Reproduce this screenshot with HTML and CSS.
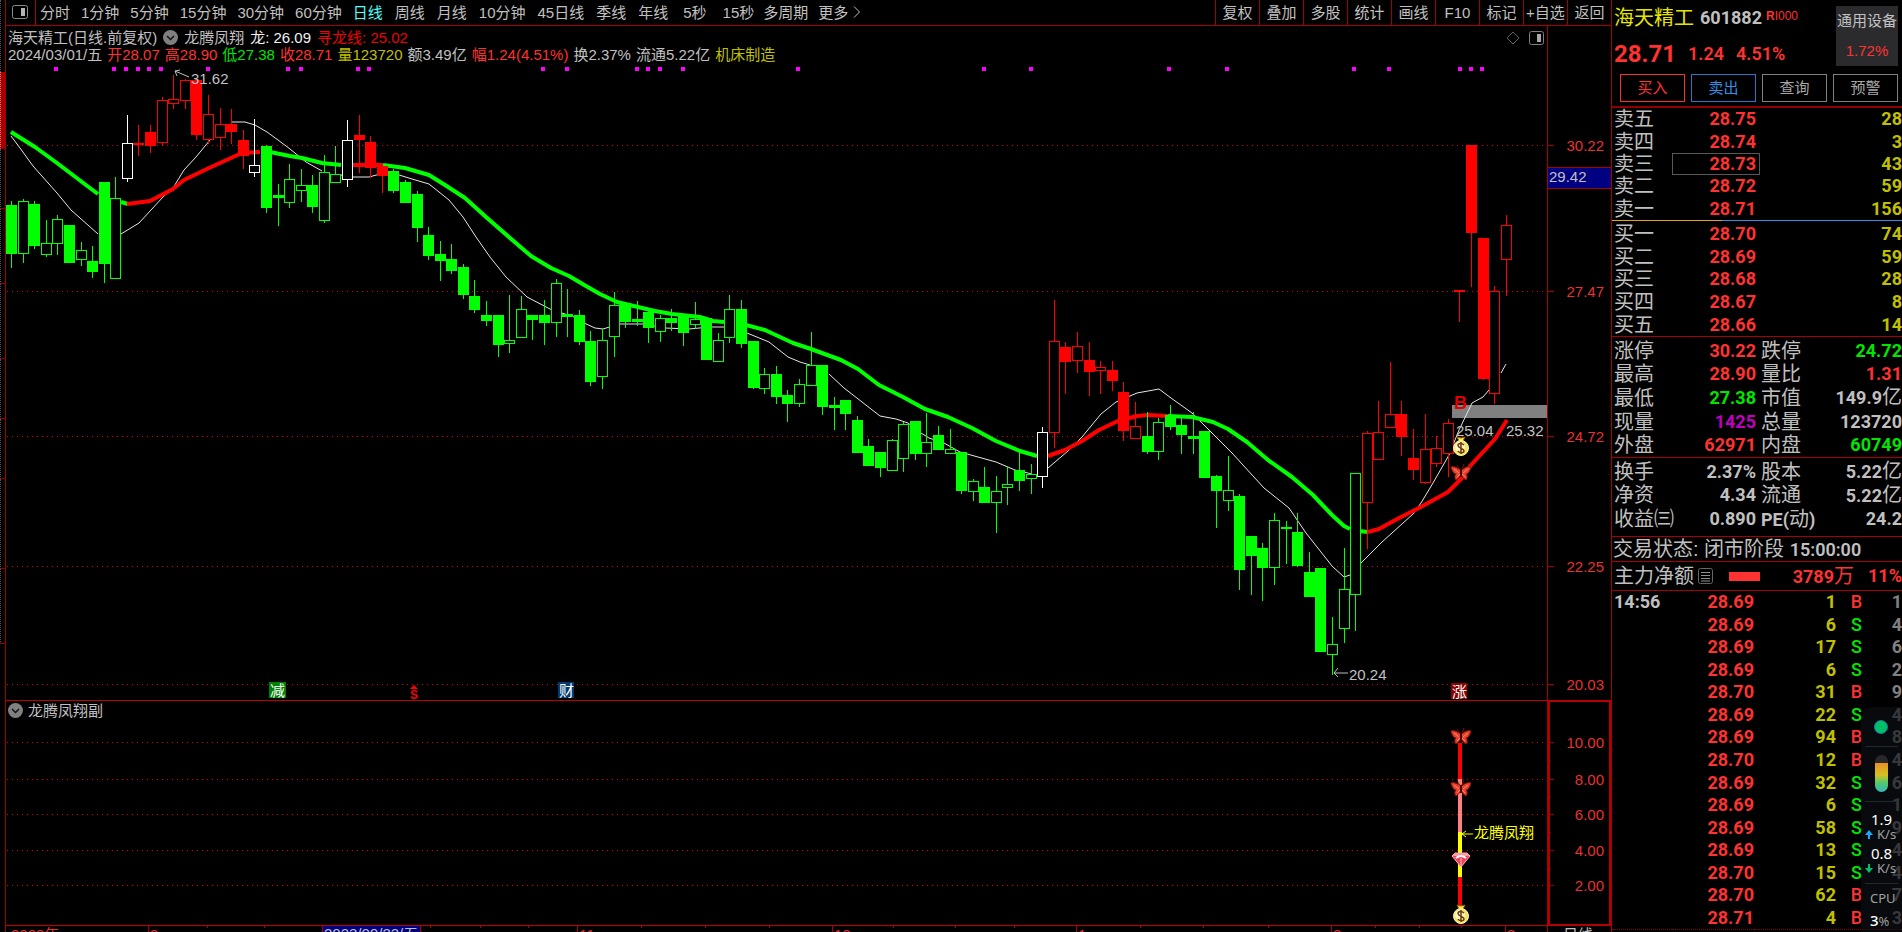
FILE: index.html
```html
<!DOCTYPE html>
<html lang="zh-CN">
<head>
<meta charset="utf-8">
<title>海天精工 601882</title>
<link rel="stylesheet" href="styles.css">
</head>
<body>
<div class="app">
  <aside class="rail">
    <span class="rail-seg s1"></span><span class="rail-seg active"></span><span class="rail-seg s2"></span><span class="rail-seg s3"></span><span class="rail-seg s3"></span><span class="rail-seg s4"></span><span class="rail-seg s4"></span><span class="rail-seg s5"></span><span class="rail-seg s3"></span>
  </aside>

  <main class="main">
    <nav class="toolbar">
      <button class="tool-icon" aria-label="布局"><svg width="16" height="14" viewBox="0 0 16 14"><rect x=".5" y=".5" width="15" height="13" rx="2" fill="none" stroke="#8c8c8c"/><rect x="9" y="3" width="4" height="8" fill="#b4b4b4"/></svg></button>
      <div class="periods">
        <div class="group minutes"><button>分时</button><button>1分钟</button><button>5分钟</button><button>15分钟</button><button>30分钟</button><button>60分钟</button></div>
        <div class="group days"><button class="on">日线</button><button>周线</button><button>月线</button><button>10分钟</button><button>45日线</button><button>季线</button><button>年线</button></div>
        <div class="group seconds"><button>5秒</button><button>15秒</button></div>
        <div class="group more"><button>多周期</button><button>更多<svg width="8" height="12" viewBox="0 0 8 12"><path d="M1 .5 6.500 6 1 11.500" fill="none" stroke="#c0c0c0"/></svg></button></div>
      </div>
      <div class="actions"><button>复权</button><button>叠加</button><button>多股</button><button>统计</button><button>画线</button><button>F10</button><button>标记</button><button>+自选</button><button>返回</button></div>
    </nav>

    <section class="chart">
      <svg id="stage" class="stage" viewBox="5 26 1606 906" preserveAspectRatio="xMinYMin meet">
        <defs>
          <g id="butterfly">
            <path d="M-1-4-4-8M1-4 3-9" stroke="#7a1010" fill="none"/>
            <path d="M0-2C-3-6-8-7-10-6-9-2-7 1-5 1-7 3-6 6-5 7-3 6-1 3 0 2 1 3 3 6 5 7 6 6 7 3 5 1 7 1 9-2 10-6 8-7 3-6 0-2Z" fill="#e8402c" stroke="#8c1408"/>
            <path d="M-7-4-2 0M7-4 2 0M-4 4-1 1M4 4 1 1" stroke="#ff8a60" fill="none"/>
            <path d="M0-4V4" stroke="#400" stroke-width="2"/>
          </g>
          <g id="moneybag">
            <path d="M-4-9 0-8 4-9 2-5H-2Z" fill="#ffe94a" stroke="#806000"/>
            <circle cx="0" cy="2" r="7.500" fill="#f4e55c" stroke="#fff6b0"/>
            <circle cx="-1" cy="1" r="5" fill="#fff7c8"/>
            <path d="M3-1C1-3-3-3-3-.5S3 2.500 3 5-2 7-3 5M0-4V8" stroke="#6b3a10" stroke-width="1.500" fill="none"/>
          </g>
          <g id="diamond">
            <path d="M-9-4-6-7H6L9-4 0 7Z" fill="#f2415c" stroke="#ffb0b8"/>
            <path d="M-6-7H6L8-4H-8Z" fill="#ff9aa8"/>
            <path d="M-5-2Q0-6 5-2" stroke="#fff" stroke-width="2" fill="none"/><path d="M0-2V6" stroke="#ffb6c0"/>
          </g>
        </defs>
        <g id="grid" class="grid-lines"></g>
        <rect x="1452" y="405" width="96" height="13" fill="#808080"/>
        <text x="1454" y="409" class="flag-b">B</text>
        <g id="averages"></g>
        <g id="candles" class="crisp"></g>
        <g id="dots" class="crisp" fill="#ff00ff"></g>
        <g class="note">
          <path d="M189 77 175 71M180 70 175 71 177 76"/><text x="191" y="84">31.62</text>
          <path d="M1348 673H1334M1338 668 1334 673 1338 677"/><text x="1349" y="680">20.24</text>
          <text x="1456" y="436">25.04</text><text x="1506" y="436">25.32</text>
        </g>
        <use href="#moneybag" x="1461" y="446"/><use href="#butterfly" x="1461" y="473"/>
        <g class="tags">
          <rect x="269" y="682" width="17" height="16" fill="#008000"/><text x="270" y="696">减</text>
          <rect x="558" y="682" width="16" height="16" fill="#003a70"/><text x="559" y="696">财</text>
          <rect x="1451" y="683" width="16" height="16" fill="#8c0000"/><text x="1452" y="697">涨</text>
          <path d="M410 689 414 685 418 689Z" fill="#f00"/><text x="410" y="699" class="dollar">S</text>
        </g>
        <path d="M1513 32 1519 38 1513 44 1507 38Z" class="rhomb"/>
        <g><rect x="1529.500" y="31.500" width="14" height="13" rx="2" fill="none" stroke="#808080"/><rect x="1537" y="34" width="4" height="8" fill="#a8a8a8"/></g>
        <g class="crisp">
          <rect x="1458" y="743" width="4" height="36" fill="#f00"/><rect x="1458" y="779" width="4" height="53" fill="#ff8080"/><rect x="1458" y="832" width="4" height="45" fill="#ff0"/><rect x="1458" y="877" width="4" height="30" fill="#f00"/>
        </g>
        <use href="#butterfly" x="1461" y="737"/><use href="#butterfly" x="1461" y="789"/><use href="#diamond" x="1461" y="860"/><use href="#moneybag" x="1461" y="914"/>
        <path d="M1473 834H1462M1466 831 1462 834 1466 837" class="sig"/><text x="1474" y="838" class="sig-text">龙腾凤翔</text>
        <g id="axis"></g>
      </svg>
      <header class="legend">
        <div class="row"><span>海天精工(日线.前复权)</span>
          <button class="chev" aria-label="指标"><svg width="15" height="15" viewBox="0 0 15 15"><circle cx="7.500" cy="7.500" r="7.500" fill="#808080"/><path d="M4 6 7.500 9.500 11 6" fill="none" stroke="#111" stroke-width="1.500"/></svg></button>
          <span>龙腾凤翔</span><span class="white">龙: 26.09</span><span class="pure">寻龙线: 25.02</span></div>
        <div class="row quote"><span>2024/03/01/五</span><span class="red">开28.07</span><span class="red">高28.90</span><span class="green">低27.38</span><span class="red">收28.71</span><span class="yellow">量123720</span><span>额3.49亿</span><span class="red">幅1.24(4.51%)</span><span>换2.37%</span><span>流通5.22亿</span><span class="yellow">机床制造</span></div>
      </header>
      <header class="legend sub">
        <div class="row"><button class="chev" aria-label="副图指标"><svg width="15" height="15" viewBox="0 0 15 15"><circle cx="7.500" cy="7.500" r="7.500" fill="#808080"/><path d="M4 6 7.500 9.500 11 6" fill="none" stroke="#111" stroke-width="1.500"/></svg></button><span>龙腾凤翔副</span></div>
      </header>
    </section>
  </main>

  <aside class="panel">
    <header class="head">
      <div class="ident">
        <div class="names"><strong class="name">海天精工</strong><span class="num code">601882</span><span class="flags"><b>R</b>I000</span></div>
        <div class="price-line"><span class="num last">28.71</span><span class="num red">1.24</span><span class="num red">4.51%</span></div>
      </div>
      <div class="sector"><span>通用设备</span><span class="red">1.72%</span></div>
      <div class="trade"><button class="buy">买入</button><button class="sell">卖出</button><button>查询</button><button>预警</button></div>
    </header>
    <table class="book asks"><tbody>
      <tr><th>卖五</th><td>28.75</td><td>28</td></tr><tr><th>卖四</th><td>28.74</td><td>3</td></tr><tr><th>卖三</th><td class="mark">28.73</td><td>43</td></tr><tr><th>卖二</th><td>28.72</td><td>59</td></tr><tr><th>卖一</th><td>28.71</td><td>156</td></tr>
    </tbody></table>
    <div class="ratio"><i></i></div>
    <div class="block"><table class="book bids"><tbody>
      <tr><th>买一</th><td>28.70</td><td>74</td></tr><tr><th>买二</th><td>28.69</td><td>59</td></tr><tr><th>买三</th><td>28.68</td><td>28</td></tr><tr><th>买四</th><td>28.67</td><td>8</td></tr><tr><th>买五</th><td>28.66</td><td>14</td></tr>
    </tbody></table></div>
    <div class="block"><table class="info five"><tbody>
      <tr><th>涨停</th><td class="red">30.22</td><th>跌停</th><td class="green">24.72</td></tr>
      <tr><th>最高</th><td class="red">28.90</td><th>量比</th><td class="red">1.31</td></tr>
      <tr><th>最低</th><td class="green">27.38</td><th>市值</th><td>149.9<span>亿</span></td></tr>
      <tr><th>现量</th><td class="purple">1425</td><th>总量</th><td>123720</td></tr>
      <tr><th>外盘</th><td class="red">62971</td><th>内盘</th><td class="green">60749</td></tr>
    </tbody></table></div>
    <div class="block tall"><table class="info three"><tbody>
      <tr><th>换手</th><td>2.37%</td><th>股本</th><td>5.22<span>亿</span></td></tr>
      <tr><th>净资</th><td>4.34</td><th>流通</th><td>5.22<span>亿</span></td></tr>
      <tr><th>收益㈢</th><td>0.890</td><th><span class="num">PE(</span>动<span class="num">)</span></th><td>24.2</td></tr>
    </tbody></table></div>
    <div class="status"><span>交易状态: 闭市阶段 </span><span class="num">15:00:00</span></div>
    <div class="force"><span>主力净额</span><svg width="16" height="16" viewBox="0 0 16 16"><rect x=".5" y=".5" width="14" height="15" rx="2" fill="none" stroke="#666"/><path d="M3 4.500H12M3 7.500H12M3 10.500H12M3 13H12" stroke="#909090"/></svg><i class="bar"></i><span class="num red amount">3789<span>万</span></span><span class="num red">11%</span></div>
    <table class="ticks"><tbody id="ticks"></tbody></table>
    <div class="monitor">
      <i class="led"></i>
      <div class="gauge-box"><i class="gauge"></i></div>
      <div class="net"><span class="val">1.9</span><span class="unit"><svg width="8" height="9" viewBox="0 0 8 9"><path d="M4 0 8 5H5V9H3V5H0Z" fill="#18a8ff"/></svg>K/s</span><span class="val second">0.8</span><span class="unit"><svg width="8" height="9" viewBox="0 0 8 9"><path d="M4 9 8 4H5V0H3V4H0Z" fill="#00c070"/></svg>K/s</span></div>
      <div class="cpu"><span>CPU</span><span class="load"><b>3</b>%</span></div>
    </div>
  </aside>
</div>
<script src="chart.js"></script>
</body>
</html>
```
FILE: styles.css
```css
* { box-sizing: border-box; }
body { margin: 0; background: #000; color: #c0c0c0; font: 15px/17px "Liberation Sans", "Noto Sans CJK SC", sans-serif; }
button { font: inherit; color: inherit; background: none; border: 0; padding: 0; margin: 0; cursor: pointer; white-space: nowrap; }
svg { display: block; }
.app { display: grid; grid-template-columns: 5px minmax(0, 1fr) 291px; height: 100vh; overflow: hidden; }

.red { color: #ff3232; }
.pure { color: #f00000; }
.green { color: #00e600; }
.yellow { color: #c0c000; }
.purple { color: #c000c0; }
.white { color: #f0f0f0; }
.num { font-family: Roboto, "Noto Sans CJK SC", sans-serif; font-weight: 700; font-size: 18px; }

.rail { display: flex; flex-direction: column; }
.rail-seg { border-bottom: 1px solid #900000; border-left: 1px dotted #555; }
.s1 { height: 72px; border-bottom: 0; }
.rail-seg.active { height: 77px; background: #a80000; border-left-color: #d88; }
.s2 { height: 60px; }
.s3 { height: 75px; }
.s4 { height: 60px; }
.s5 { height: 90px; }

.main { display: flex; flex-direction: column; min-width: 0; border-left: 1px solid #a00000; }
.toolbar { display: flex; height: 26px; border-bottom: 1px solid #a80000; overflow: hidden; }
.toolbar button { padding-bottom: 1px; }
.toolbar .tool-icon { width: 30px; padding: 0 0 1px 6px; border-right: 1px solid #a80000; }
.periods { display: flex; flex: 1; padding-left: 4px; }
.group { display: flex; }
.minutes { gap: 11px; margin-right: 11px; }
.days { gap: 12px; margin-right: 15px; }
.seconds { gap: 16px; margin-right: 9px; }
.more { gap: 10px; }
.more button { display: flex; align-items: center; gap: 5px; }
.on { color: #50ffff; }
.actions { display: flex; }
.actions button { width: 44px; border-left: 1px solid #a00000; }

.chart { position: relative; flex: 1; display: grid; grid-template-rows: 675px 1fr; min-height: 0; }
.stage { position: absolute; top: 0; right: 0; bottom: 0; left: -1px; width: calc(100% + 1px); height: 100%; font-size: 15px; }
.legend { position: relative; padding: 3px 2px; align-self: start; }
.legend.sub { padding-top: 1px; }
.row { display: flex; align-items: center; height: 17px; gap: 6px; white-space: nowrap; }
.quote { gap: 5px; }
.sub .row { gap: 5px; }
.crisp { shape-rendering: crispEdges; }
.grid-lines line { stroke: #d80000; stroke-dasharray: 1 4; shape-rendering: crispEdges; }
.note text { fill: #c0c0c0; }
.note path { fill: none; stroke: #c0c0c0; }
.flag-b { fill: #e00000; font-weight: bold; font-size: 18px; }
.tags text { fill: #fff; font-size: 15px; }
.tags .dollar { fill: #f00; font-size: 12px; font-weight: bold; }
.rhomb { fill: none; stroke: #606060; }
.sig { fill: none; stroke: #ff0; }
.sig-text { fill: #ff0; }
.axis-text { fill: #e63232; text-anchor: end; }
.axis-time { fill: #e63232; }
.axis-sel { fill: #c0c0c0; }

.panel { position: relative; border-left: 1px solid #a80000; display: flex; flex-direction: column; font-size: 20px; line-height: 22px; min-width: 0; }
.panel > * { flex: none; }
.head { height: 108px; border-bottom: 2px solid #900000; display: grid; grid-template-columns: 1fr 62px; align-content: start; padding: 6px 4px 0 2px; }
.names { display: flex; align-items: center; height: 24px; }
.name { color: #e6e600; font-weight: 400; }
.code { margin-left: 6px; }
.flags { color: #ff3232; font-size: 12px; margin-left: 4px; line-height: 14px; align-self: start; padding-top: 3px; }
.price-line { display: flex; align-items: center; gap: 12px; height: 38px; padding-top: 9px; }
.price-line .last { font-size: 24px; color: #ff3232; }
.price-line .red, .status .num { font-weight: 600; }
.sector { height: 60px; background: #2b2b2e; font-size: 15px; text-align: center; display: flex; flex-direction: column; justify-content: space-between; padding: 4px 0; }
.trade { grid-column: 1 / 3; display: grid; grid-template-columns: repeat(4, 1fr); gap: 6px; padding: 6px 0 0 6px; font-size: 15px; }
.trade button { height: 28px; border: 1px solid #808080; color: #a8a8a8; }
.trade .buy { border-color: #f03232; color: #ff3232; }
.trade .sell { border-color: #2878c8; color: #3290e6; }

table { border-collapse: collapse; table-layout: fixed; width: 100%; }
th { font-weight: 400; text-align: left; padding: 0 0 0 2px; white-space: nowrap; }
td { padding: 0; text-align: right; font-family: Roboto, sans-serif; font-weight: 700; font-size: 18px; white-space: nowrap; }
td span, .amount span { font: 20px/20px "Noto Sans CJK SC", sans-serif; }
.book th { width: 60px; }
.book td { color: #c0c000; }
.book th + td { width: 88px; padding-right: 4px; color: #ff3232; }
.book .mark { outline: 1px solid #585858; outline-offset: -1px; }
.asks { height: 112px; }
.bids { height: 113px; }
.ratio { height: 1px; background: #3290e6; }
.ratio i { display: block; width: 38%; height: 1px; background: #e8a020; }
.block { padding-top: 2px; border-bottom: 1px solid #a80000; }
.tall { padding-bottom: 5px; }
.five { height: 118px; }
.three { height: 71px; }
.info th { width: 62px; }
.info th + td { width: 82px; }
.info td + th { padding-left: 5px; width: 67px; }
.info td + th + td { width: auto; }
.status { height: 25px; border-bottom: 1px solid #a80000; padding-left: 1px; white-space: pre; line-height: 24px; }
.force { height: 29px; border-bottom: 1px solid #a80000; padding-left: 2px; display: flex; align-items: center; }
.force svg { margin-left: 4px; }
.bar { width: 31px; height: 9px; background: #ff3232; margin-left: 15px; }
.amount { margin-left: auto; margin-right: 14px; }
.ticks { height: 339px; border-bottom: 1px dotted #900000; }
.ticks th { font: 700 18px/22px Roboto, sans-serif; width: 60px; }
.ticks .p { width: 82px; color: #ff3232; }
.ticks .q { width: 82px; color: #c0c000; }
.ticks .s { width: 41px; text-align: center; font-weight: 500; }
.ticks .n { color: #808080; }

.monitor { position: absolute; right: 0; bottom: 0; width: 41px; height: 225px; background: rgba(14, 15, 20, .64); border-radius: 12px 0 0 0; padding: 0 4px; font: 15px/18px "Noto Sans", sans-serif; color: #a0a0a0; }
.led { display: block; width: 14px; height: 14px; border-radius: 50%; background: #00c068; border: 1px solid #2078a0; margin: 13px 0 12px 9px; }
.gauge-box { border: 1px solid #1e2a2c; border-width: 1px 0; height: 56px; padding: 8px 10px; }
.gauge { display: block; width: 13px; height: 37px; border-radius: 7px; background: linear-gradient(#28282a 0 8px, #e89028 8px, #d8c020 20px, #50c870 28px, #38b8b8); }
.net { height: 82px; border-bottom: 1px solid #1e2a2c; padding-top: 8px; }
.val { display: block; color: #fff; line-height: 18px; text-align: center; }
.second { margin-top: 4px; }
.unit { display: flex; align-items: center; gap: 4px; font-size: 13px; line-height: 12px; }
.cpu { font-size: 13px; padding: 5px 0 0 5px; }
.cpu span { display: block; }
.load { padding-top: 4px; }
.load b { color: #fff; font-weight: 500; font-size: 15px; }
```
FILE: chart.js
```js
const NS = 'http://www.w3.org/2000/svg';
const add = (parent, tag, attrs, text) => {
  const el = document.createElementNS(NS, tag);
  for (const k in attrs) el.setAttribute(k, attrs[k]);
  if (text) el.textContent = text;
  parent.appendChild(el);
  return el;
};
const $ = id => document.getElementById(id);

/* type, high, top, bottom, low; upper case = filled body */
const candles = `G 201 205 253 267|g 199 201 253 262|G 201 204 245 248|g 220 243 254 256|g 215 219 243 254|G 225 225 262 262|g 242 250 259 265|G 246 261 271 277|G 182 182 263 282|g 177 198 278 278|w 115 143 178 181|R 125 143 144 155|R 125 132 145 152|r 97 100 142 145|r 75 99 103 108|r 79 80 100 108|R 80 80 134 139|r 95 114 139 143|r 108 124 137 149|R 109 124 131 143|R 130 140 155 168|w 119 165 172 176|G 145 146 207 212|G 184 195 197 225|g 164 179 202 207|g 169 185 190 201|G 175 185 206 212|g 155 172 220 222|g 146 174 182 182|w 120 140 179 186|R 115 135 139 172|R 136 142 167 177|R 165 166 175 192|G 169 171 190 192|G 180 182 202 202|G 191 194 227 241|G 227 235 255 259|G 241 254 260 280|G 244 259 270 273|G 264 267 294 298|G 280 296 309 312|G 301 315 320 325|G 315 315 344 356|g 295 340 343 352|g 296 309 337 337|G 315 315 319 339|G 300 315 322 344|g 279 283 322 336|G 289 314 316 336|G 310 315 341 344|G 331 341 381 385|g 329 340 376 388|g 292 305 336 356|G 302 303 321 327|G 301 319 321 325|G 310 312 327 342|g 315 318 331 341|G 309 318 322 330|G 314 314 332 345|g 302 319 324 328|G 318 318 359 359|g 333 340 361 361|g 295 309 337 342|G 300 309 343 347|G 341 341 387 388|g 368 374 388 393|G 366 374 396 403|G 390 395 403 421|g 379 384 403 406|g 332 365 385 385|G 365 365 406 414|G 397 405 407 429|G 400 400 413 429|G 416 420 452 452|G 439 446 465 465|G 452 452 467 476|g 439 440 470 470|g 422 424 458 471|G 421 421 453 459|g 413 442 453 466|G 426 435 449 449|g 429 449 453 453|G 452 452 490 493|g 479 481 491 500|G 467 487 502 502|g 476 491 502 532|g 466 484 487 504|G 452 470 480 490|g 464 474 478 493|w 427 432 476 487|r 300 341 432 447|R 342 347 361 393|r 332 346 360 372|R 342 360 371 395|r 361 367 370 393|R 361 370 380 390|R 382 392 430 440|r 402 426 438 438|G 412 436 451 453|g 418 422 451 459|G 405 415 426 429|G 418 425 434 453|G 412 436 438 453|G 431 431 477 477|G 475 476 490 527|g 456 490 500 510|G 494 496 569 589|G 536 536 555 594|G 543 548 567 600|g 513 520 567 584|G 521 527 528 563|G 513 532 565 566|G 552 572 596 596|G 568 568 651 651|g 617 644 654 674|g 548 589 628 642|g 473 473 594 630|r 431 433 502 548|r 401 432 459 459|r 362 414 427 427|R 401 414 436 455|R 429 458 469 479|r 414 449 482 483|r 436 448 463 466|r 419 423 453 476|R 290 290 291 321|R 145 145 232 286|R 238 238 378 379|r 286 291 393 403|r 215 225 259 295`;
const tone = { g: '#00ff00', r: '#ff0000', w: '#ffffff' };
candles.split('|').forEach((row, i) => {
  const [type, ...v] = row.split(' ');
  const [high, top, bottom, low] = v.map(Number);
  const x = Math.floor(11.5 + i * 11.587);
  const color = tone[type.toLowerCase()];
  const filled = type < 'a';
  const g = $('candles');
  if (low > high) add(g, 'rect', { x, y: high, width: 1, height: low - high + 1, fill: color });
  if (filled) add(g, 'rect', { x: x - 5, y: top, width: 11, height: Math.max(1, bottom - top + 1), fill: color });
  else add(g, 'rect', { x: x - 4.5, y: top + .5, width: 10, height: bottom - top, fill: '#000', stroke: color });
});

const line = (points, stroke, width) =>
  add($('averages'), 'polyline', { points, stroke, 'stroke-width': width, fill: 'none', 'stroke-linejoin': 'round' });
[
  '11,136 20,148 33,166 57,193 71,210 98,234', '121,234 139,223 151,210 163,197 173,188 184,170 196,157 210,140',
  '231,122 245,122 255,125 267,132 278,140 290,149 306,162 322,171', '341,175 352,177 369,177 380,174 396,174 412,179 429,184 449,200 463,217 476,237 490,257 506,277 527,297 550,309 562,313 574,317 584,323 595,328 603,329 619,324 643,324 665,328 689,329 710,327 724,327',
  '747,333 769,342 788,357 800,362 810,365', '829,374 844,388 862,402 880,416 896,419 908,423 921,433 929,438 944,443 960,452 996,462 1015,470 1032,474',
  '1048,468 1068,451 1082,437 1101,414 1116,402 1137,393 1159,389 1171,398 1192,413 1213,434 1232,453 1264,488 1289,508 1306,533 1332,566 1344,577 1350,575',
  '1360,564 1382,542 1413,514 1421,503 1433,483 1449,455 1459,430 1472,403 1483,397 1489,390', '1501,373 1506,364'
].forEach(p => line(p, '#e6e6e6', 1));
[
  ['11,132 35,147 57,163 82,182 98,194', '#00ff00'], ['121,202 128,204', '#00ff00'],
  ['127,204 150,201 173,189 184,180 209,168 231,158 242,153 260,152', '#ff0000'],
  ['270,152 290,156 302,158 322,163 341,165', '#00ff00'], ['352,165 383,165', '#ff0000'],
  ['383,165 405,168 429,175 445,185 465,198 486,217 510,238 531,256 551,268 569,276 586,286 600,294 617,302 638,307 655,311 672,314 700,317 713,321 724,322', '#00ff00'],
  ['746,325 765,330 793,343 811,349 841,360 858,369 879,385 903,397 925,409 948,417 972,428 996,441 1020,451 1037,456', '#00ff00'],
  ['1048,456 1065,450 1082,441 1099,430 1118,421 1137,416 1148,415 1168,416', '#ff0000'],
  ['1168,416 1192,417 1213,422 1228,429 1247,442 1268,460 1292,477 1313,495 1332,515 1344,526 1350,529', '#00ff00'],
  ['1359,531 1368,532', '#00ff00'], ['1368,532 1379,529 1399,518 1419,508 1448,492 1461,479 1471,465 1495,439 1507,420', '#ff0000']
].forEach(([p, c]) => line(p, c, 4));

[56, 114, 126, 138, 149, 161, 208, 288, 301, 358, 369, 543, 567, 637, 648, 660, 683, 798, 984, 1031, 1169, 1227, 1354, 1389, 1460, 1471, 1482]
  .forEach(x => add($('dots'), 'rect', { x: x - 2, y: 67, width: 4, height: 4 }));

const axis = $('axis');
const rule = (x1, y1, x2, y2, w = 1, c = '#a80000') =>
  add(axis, 'line', { x1, y1, x2, y2, stroke: c, 'stroke-width': w, class: 'crisp' });
[[145, '30.22'], [291, '27.47'], [436, '24.72'], [566, '22.25'], [684, '20.03'], [742, '10.00'], [779, '8.00'], [814, '6.00'], [850, '4.00'], [885, '2.00']].forEach(([y, t]) => {
  add($('grid'), 'line', { x1: 7, x2: 1548, y1: y + .5, y2: y + .5 });
  rule(1548, y + .5, 1554, y + .5);
  add(axis, 'text', { x: 1604, y: y + 6, class: 'axis-text' }, t);
});
[761, 796, 832, 868].forEach(y => rule(1548, y + .5, 1551, y + .5));
rule(1547.5, 26, 1547.5, 932, 1);
rule(5, 700.5, 1611, 700.5, 1, '#c00000');
rule(5, 925.5, 1611, 925.5, 1, '#c00000');
add(axis, 'rect', { x: 1549, y: 701, width: 61, height: 224, fill: 'none', stroke: '#b40000', 'stroke-width': 2, class: 'crisp' });
add(axis, 'rect', { x: 1547.5, y: 167.5, width: 64, height: 21, fill: '#000080', stroke: '#a80000', class: 'crisp' });
add(axis, 'text', { x: 1549, y: 182, class: 'axis-sel' }, '29.42');
add(axis, 'rect', { x: 323, y: 926, width: 97, height: 8, fill: '#000080' });
[207, 264, 430, 480, 528, 641, 705, 769, 893, 955, 1014, 1140, 1203, 1268, 1375, 1419, 1461].forEach(x => rule(x + .5, 926, x + .5, 928));
[148, 322, 420, 577, 832, 1076, 1331, 1505].forEach(x => rule(x + .5, 926, x + .5, 932));
[[11, '2023年'], [150, '9'], [579, '11'], [834, '12'], [1078, '1'], [1333, '2'], [1507, '3']].forEach(([x, t]) =>
  add(axis, 'text', { x, y: 940, class: 'axis-time' }, t));
add(axis, 'text', { x: 324, y: 939, class: 'axis-sel' }, '2023/09/22/五');
add(axis, 'text', { x: 1563, y: 940, class: 'axis-sel' }, '日线');

[['14:56', '28.69', 1, 'B', 1], ['', '28.69', 6, 'S', 4], ['', '28.69', 17, 'S', 6], ['', '28.69', 6, 'S', 2], ['', '28.70', 31, 'B', 9], ['', '28.69', 22, 'S', 4], ['', '28.69', 94, 'B', 8], ['', '28.70', 12, 'B', 4], ['', '28.69', 32, 'S', 6], ['', '28.69', 6, 'S', 1], ['', '28.69', 58, 'S', 9], ['', '28.69', 13, 'S', 4], ['', '28.70', 15, 'S', 4], ['', '28.70', 62, 'B', 7], ['', '28.71', 4, 'B', 3]].forEach(([t, p, q, s, n]) => {
  $('ticks').insertAdjacentHTML('beforeend', `<tr><th>${t}</th><td class="p">${p}</td><td class="q">${q}</td><td class="s ${s === 'B' ? 'red' : 'green'}">${s}</td><td class="n">${n}</td></tr>`);
});
```
